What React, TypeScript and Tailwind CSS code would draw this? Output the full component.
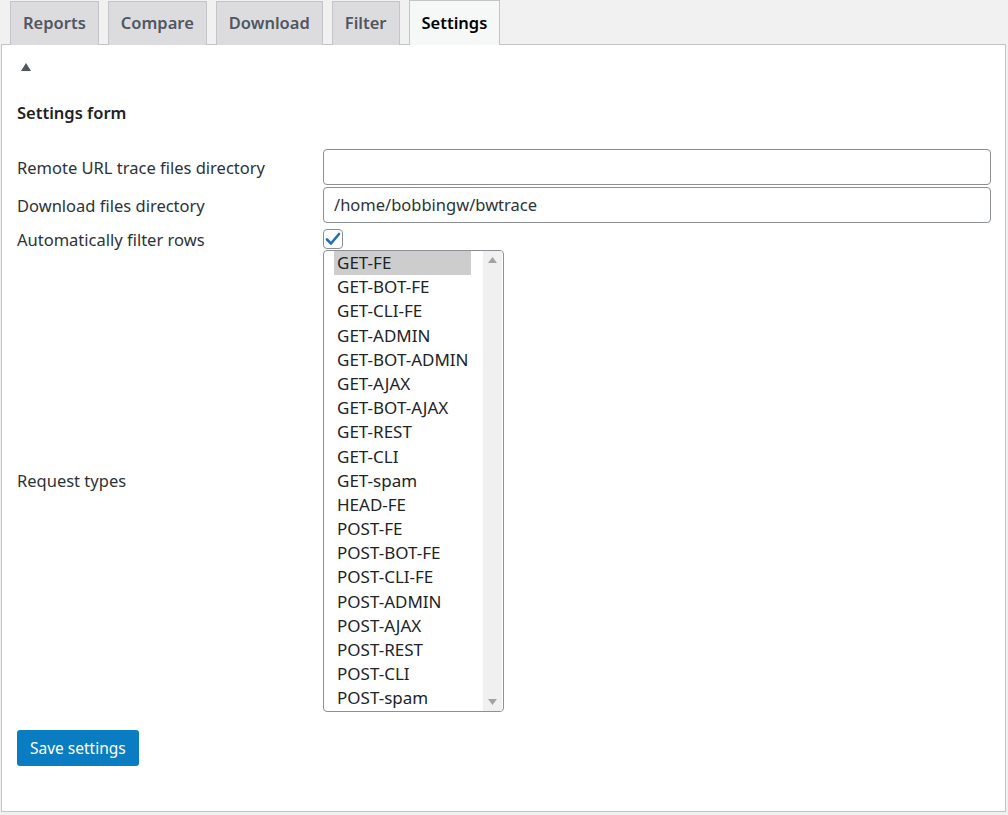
import * as React from "react"

const TABS = ["Reports", "Compare", "Download", "Filter", "Settings"]

const REQUEST_TYPES = [
  "GET-FE",
  "GET-BOT-FE",
  "GET-CLI-FE",
  "GET-ADMIN",
  "GET-BOT-ADMIN",
  "GET-AJAX",
  "GET-BOT-AJAX",
  "GET-REST",
  "GET-CLI",
  "GET-spam",
  "HEAD-FE",
  "POST-FE",
  "POST-BOT-FE",
  "POST-CLI-FE",
  "POST-ADMIN",
  "POST-AJAX",
  "POST-REST",
  "POST-CLI",
  "POST-spam",
]

function Tabs() {
  return (
    <div className="flex items-end gap-[9px] pl-[10px] h-[45px]">
      {TABS.map((tab) => {
        const active = tab === "Settings"
        return (
          <div
            key={tab}
            className={
              active
                ? "h-[45px] px-[12px] flex items-center border border-b-0 border-[#c3c4c7] bg-[#f6f7f7] text-black font-semibold text-[16.5px] relative z-10"
                : "h-[44px] px-[12px] flex items-center border border-b-0 border-[#c3c4c7] bg-[#dcdcde] text-[#50575e] font-semibold text-[16.5px]"
            }
          >
            {tab}
          </div>
        )
      })}
    </div>
  )
}

function RequestTypesList() {
  return (
    <div className="w-[181px] h-[462px] border border-[#8c8f94] rounded-[4px] bg-white flex overflow-hidden">
      <div className="flex-1 pl-[10px] pt-0">
        {REQUEST_TYPES.map((t, i) => (
          <div
            key={t}
            className={
              "h-[24.2px] leading-[24px] pl-[3px] w-[137px] whitespace-nowrap text-[17px] text-[#1d2327] " +
              (i === 0 ? "bg-[#cdcdcd]" : "")
            }
          >
            {t}
          </div>
        ))}
      </div>
      {/* scrollbar */}
      <div className="w-[19px] bg-[#f0f0f0] flex flex-col justify-between items-center py-[6px] mr-[1px]">
        <svg width="9" height="6" viewBox="0 0 9 6">
          <path d="M4.5 0 L9 6 L0 6 Z" fill="#a3a3a3" />
        </svg>
        <svg width="9" height="6" viewBox="0 0 9 6">
          <path d="M0 0 L9 0 L4.5 6 Z" fill="#a3a3a3" />
        </svg>
      </div>
    </div>
  )
}

export default function App() {
  return (
    <div
      className="min-h-[815px] bg-[#f1f1f1] text-[#1d2327]"
      style={{ fontFamily: '"Noto Sans", "Open Sans", sans-serif' }}
    >
      <Tabs />
      <div className="mx-[1px] mr-[2px] -mt-px border border-[#c3c4c7] bg-white h-[768px] pl-[15px] pr-[14px]">
        <div className="pt-[18px] pl-[4px]">
          <svg width="10" height="8" viewBox="0 0 10 8">
            <path d="M5 0 L10 8 L0 8 Z" fill="#50575e" />
          </svg>
        </div>
        <h2 className="mt-[30px] text-[16.5px] font-semibold leading-[24px] text-[#1d2327]">Settings form</h2>

        <div className="mt-[24px] grid grid-cols-[306px_1fr] items-center text-[16.5px] text-[#2c3338]">
          <div className="pt-[2px]">Remote URL trace files directory</div>
          <div className="h-[36px] border border-[#8c8f94] rounded-[4px] bg-white" />

          <div className="pt-[2px] mt-[2px]">Download files directory</div>
          <div className="mt-[2px] h-[36px] border border-[#8c8f94] rounded-[4px] bg-white flex items-center px-[10px] text-[#2c3338]">
            /home/bobbingw/bwtrace
          </div>

          <div className="mt-[5px] pt-[2px] leading-[20px]">Automatically filter rows</div>
          <div className="mt-[5px] h-[22px] flex items-center">
            <div className="w-[20px] h-[20px] border border-[#8c8f94] rounded-[4px] bg-white flex items-center justify-center">
              <svg width="16" height="14" viewBox="0 0 16 14">
                <path d="M2 7.5 L6 11.5 L14 2" fill="none" stroke="#2271b1" strokeWidth="2.6" strokeLinecap="round" strokeLinejoin="round" />
              </svg>
            </div>
          </div>

          <div className="mt-[0px]">Request types</div>
          <div className="mt-[0px]">
            <RequestTypesList />
          </div>
        </div>

        <button className="mt-[18px] h-[36px] px-[13px] rounded-[3px] bg-[#0a7cc1] text-white text-[15.5px] leading-[34px]">
          Save settings
        </button>
      </div>
    </div>
  )
}
